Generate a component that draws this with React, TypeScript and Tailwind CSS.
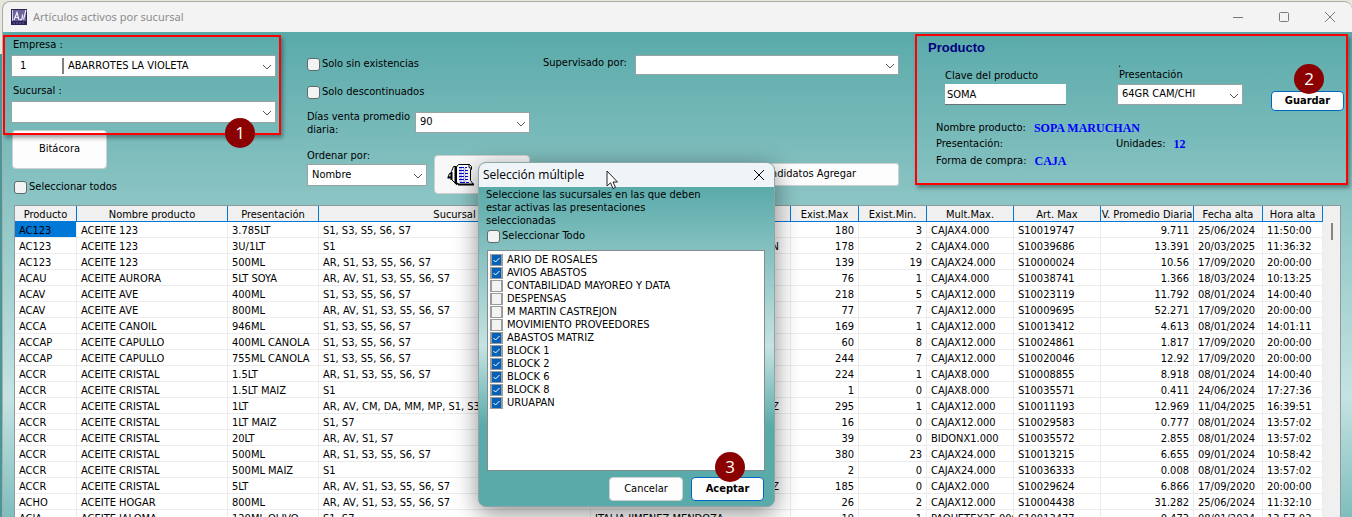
import React from 'react';
import { clsx } from 'clsx';

type Row = [string, string, string, string, string, string, string, string, string, string, string, string];

const SIN_AR = 'S1, S3, S5, S6, S7';
const CON_AR = 'AR, S1, S3, S5, S6, S7';
const CON_AV = 'AR, AV, S1, S3, S5, S6, S7';

const ROWS: Row[] = [
  ['AC123', 'ACEITE 123', '3.785LT', SIN_AR, '', '180', '3', 'CAJAX4.000', 'S10019747', '9.711', '25/06/2024', '11:50:00'],
  ['AC123', 'ACEITE 123', '3U/1LT', 'S1', 'N', '178', '2', 'CAJAX4.000', 'S10039686', '13.391', '20/03/2025', '11:36:32'],
  ['AC123', 'ACEITE 123', '500ML', CON_AR, '', '139', '19', 'CAJAX24.000', 'S10000024', '10.56', '17/09/2020', '20:00:00'],
  ['ACAU', 'ACEITE AURORA', '5LT SOYA', CON_AV, '', '76', '1', 'CAJAX4.000', 'S10038741', '1.366', '18/03/2024', '10:13:25'],
  ['ACAV', 'ACEITE AVE', '400ML', SIN_AR, '', '218', '5', 'CAJAX12.000', 'S10023119', '11.792', '08/01/2024', '14:00:40'],
  ['ACAV', 'ACEITE AVE', '800ML', CON_AV, '', '77', '7', 'CAJAX12.000', 'S10009695', '52.271', '17/09/2020', '20:00:00'],
  ['ACCA', 'ACEITE CANOIL', '946ML', SIN_AR, '', '169', '1', 'CAJAX12.000', 'S10013412', '4.613', '08/01/2024', '14:01:11'],
  ['ACCAP', 'ACEITE CAPULLO', '400ML CANOLA', SIN_AR, '', '60', '8', 'CAJAX12.000', 'S10024861', '1.817', '17/09/2020', '20:00:00'],
  ['ACCAP', 'ACEITE CAPULLO', '755ML CANOLA', SIN_AR, '', '244', '7', 'CAJAX12.000', 'S10020046', '12.92', '17/09/2020', '20:00:00'],
  ['ACCR', 'ACEITE CRISTAL', '1.5LT', CON_AR, '', '224', '1', 'CAJAX8.000', 'S10008855', '8.918', '08/01/2024', '14:00:40'],
  ['ACCR', 'ACEITE CRISTAL', '1.5LT MAIZ', 'S1', '', '1', '0', 'CAJAX8.000', 'S10035571', '0.411', '24/06/2024', '17:27:36'],
  ['ACCR', 'ACEITE CRISTAL', '1LT', 'AR, AV, CM, DA, MM, MP, S1, S3, S5, S6, S7', 'Z', '295', '1', 'CAJAX12.000', 'S10011193', '12.969', '11/04/2025', '16:39:51'],
  ['ACCR', 'ACEITE CRISTAL', '1LT MAIZ', 'S1, S7', '', '16', '0', 'CAJAX12.000', 'S10029583', '0.777', '08/01/2024', '13:57:02'],
  ['ACCR', 'ACEITE CRISTAL', '20LT', 'AR, AV, S1, S7', '', '39', '0', 'BIDONX1.000', 'S10035572', '2.855', '08/01/2024', '13:57:02'],
  ['ACCR', 'ACEITE CRISTAL', '500ML', CON_AR, '', '380', '23', 'CAJAX24.000', 'S10013215', '6.655', '09/01/2024', '10:58:42'],
  ['ACCR', 'ACEITE CRISTAL', '500ML MAIZ', 'S1', '', '2', '0', 'CAJAX24.000', 'S10036333', '0.008', '08/01/2024', '13:57:02'],
  ['ACCR', 'ACEITE CRISTAL', '5LT', CON_AV, 'Z', '185', '0', 'CAJAX2.000', 'S10029624', '6.866', '17/09/2020', '20:00:00'],
  ['ACHO', 'ACEITE HOGAR', '800ML', CON_AV, '', '26', '2', 'CAJAX12.000', 'S10004438', '31.282', '25/06/2024', '11:32:10'],
  ['ACJA', 'ACEITE JALOMA', '120ML OLIVO', 'S1, S7', 'ITALIA JIMENEZ MENDOZA', '19', '1', 'PAQUETEX25.000', 'S10013477', '0.473', '08/01/2024', '13:57:02'],
];

const COLUMNS = [
  { title: 'Producto', width: 'w-[62px]' },
  { title: 'Nombre producto', width: 'w-[151px]' },
  { title: 'Presentación', width: 'w-[91px]' },
  { title: 'Sucursal', width: 'w-[272px]' },
  { title: '', width: '' },
  { title: 'Exist.Max', width: 'w-[68px]' },
  { title: 'Exist.Min.', width: 'w-[68px]' },
  { title: 'Mult.Max.', width: 'w-[87px]' },
  { title: 'Art. Max', width: 'w-[87px]' },
  { title: 'V. Promedio Diaria', width: 'w-[93px]' },
  { title: 'Fecha alta', width: 'w-[69px]' },
  { title: 'Hora alta', width: 'w-[60px]' },
];

const BRANCHES: [string, boolean][] = [
  ['ARIO DE ROSALES', true],
  ['AVIOS ABASTOS', true],
  ['CONTABILIDAD MAYOREO Y DATA', false],
  ['DESPENSAS', false],
  ['M MARTIN CASTREJON', false],
  ['MOVIMIENTO PROVEEDORES', false],
  ['ABASTOS MATRIZ', true],
  ['BLOCK 1', true],
  ['BLOCK 2', true],
  ['BLOCK 6', true],
  ['BLOCK 8', true],
  ['URUAPAN', true],
];

function Combo({ id, value, code, className }: { id: string; value: string; code?: string; className: string }) {
  return (
    <div className={clsx('relative flex items-center border border-[#9aa3a3] bg-white', className)}>
      {code && <span className="ml-1 w-[48px] shrink-0 border-r-2 border-[#808080] pl-1 leading-4">{code}</span>}
      <select id={id} defaultValue={value} className="h-full min-w-0 flex-1 appearance-none bg-transparent pl-1 pr-5 outline-none">
        <option value={value}>{value}</option>
      </select>
      <svg className="pointer-events-none absolute right-[3px] top-1/2 mt-[-3px] h-2 w-2.5" viewBox="0 0 10 8" fill="none" stroke="#555" strokeWidth="1">
        <path d="M1 2 L5 6 L9 2" />
      </svg>
    </div>
  );
}

function Tick({ id, label }: { id: string; label: string }) {
  return (
    <label htmlFor={id} className="flex h-4 items-center gap-[2px]">
      <input id={id} type="checkbox" className="h-[13px] w-[13px] appearance-none rounded-[3px] border border-[#5e6b6b] bg-[#f3f3f3]" />
      {label}
    </label>
  );
}

function Marker({ n, className }: { n: number; className: string }) {
  return (
    <span className={clsx("absolute z-10 flex h-[30px] w-[30px] items-center justify-center rounded-full bg-[#8b0000] font-['Open_Sans',sans-serif] text-[17px] text-white", className)}>
      {n}
    </span>
  );
}

function PrinterIcon() {
  return (
    <svg className="h-6 w-7" viewBox="0 0 28 24" fill="none" stroke="#000">
      <path d="M8.5 3.5 H6.5 L4.5 8.5 V16.5 L8.5 20.5" fill="#fff" />
      <path d="M4.5 10.5 H2.5 L1.5 12.5 V14.5 H4.5" fill="#c0c0c0" />
      <path d="M0.5 14.5 H4.5 M4.5 9 V17" strokeWidth="2" />
      <path d="M9.5 4 L11.5 1.5 H22.5 L24.5 3.5 V6.5 H23.5 V17.5 L26.5 21.5 H12 L9.5 19.5 Z" fill="#fff" />
      <path d="M8.5 3 V19.5 L10.5 21.5 M11 21.5 H27" strokeWidth="2" />
      <path d="M22 1.5 V4.5 L24.5 5.5" />
      <path d="M12 4.5 H20 M12 7.5 H21 M12 10.5 H21 M12 13.5 H21 M12 16.5 H21 M13 19.5 H22" stroke="#0000d0" strokeDasharray="5 1" />
      <path d="M12 6 H19 M12 9 H20 M12 12 H19 M12 15 H20 M12 18 H20" stroke="#8f8fe8" strokeDasharray="3 1" />
    </svg>
  );
}

function AppLogo() {
  return (
    <svg className="h-4 w-4" viewBox="0 0 16 16" fill="none">
      <rect width="16" height="16" fill="#2d2358" />
      <rect x="1" y="1" width="14" height="11" fill="#6a649a" />
      <path d="M1.5 1 V12" stroke="#d5d2e8" />
      <path d="M3 11 L6 3.5 L8 11 M4 8.5 H7.5" stroke="#f0eff8" strokeWidth="1.2" />
      <path d="M8.5 10.5 C11 11.5 11.5 9 11.5 5.5 M12.5 10.5 L15 1" stroke="#f0eff8" strokeWidth="1.2" />
      <path d="M2 14 H14" stroke="#6f659c" strokeDasharray="2 1" />
    </svg>
  );
}

function CloseIcon() {
  return (
    <svg className="h-3 w-3" viewBox="0 0 12 12" fill="none" stroke="currentColor" strokeWidth="1">
      <path d="M1 1 L11 11 M11 1 L1 11" />
    </svg>
  );
}

function Filters() {
  return (
    <div className="flex min-w-0 flex-1 gap-[13px]">
      <div className="w-[223px] shrink-0 pt-6">
        <div className="flex flex-col gap-3">
          <Tick id="sin-existencias" label="Solo sin existencias" />
          <Tick id="descontinuados" label="Solo descontinuados" />
        </div>
        <div className="mt-[10px] flex items-start">
          <label htmlFor="dias" className="w-[108px] leading-[13px]">Días venta promedio diaria:</label>
          <Combo id="dias" value="90" className="mt-[2px] h-[21px] flex-1" />
        </div>
        <div className="mt-3 flex gap-[7px]">
          <div className="w-[120px]">
            <label htmlFor="orden" className="block leading-4">Ordenar por:</label>
            <Combo id="orden" value="Nombre" className="h-[22px]" />
          </div>
          <button aria-label="Imprimir" className="mt-[7px] flex h-[39px] flex-1 items-center rounded-[4px] border border-[#d0d0d0] bg-[#f8f8f8] pl-3">
            <PrinterIcon />
          </button>
        </div>
      </div>
      <div className="flex min-w-0 flex-1 flex-col items-end pt-[23px]">
        <div className="flex w-full items-start">
          <label htmlFor="supervisor" className="w-[92px] shrink-0 leading-4">Supervisado por:</label>
          <Combo id="supervisor" value="" className="h-5 min-w-0 flex-1" />
        </div>
        <button className="mt-[88px] h-[23px] w-[184px] rounded-[3px] border border-[#d0d0d0] bg-[#fdfdfd]">Candidatos Agregar</button>
      </div>
    </div>
  );
}

function ProductPanel() {
  return (
    <section className="relative mt-[2px] h-[151px] w-[433px] shrink-0 border-2 border-[#ff0000] pl-[11px] shadow-[2px_3px_4px_rgba(0,0,0,0.35)]">
      <h2 className="mt-1 font-['Liberation_Sans',sans-serif] text-[13px] font-bold leading-4 text-[#000080]">Producto</h2>
      <div className="flex pl-[17px] pt-[7px]">
        <div className="w-[121px] pt-[5px]">
          <label htmlFor="clave" className="block h-4 leading-4">Clave del producto</label>
          <input id="clave" defaultValue="SOMA" className="block h-[21px] w-full border-b border-[#6b7070] bg-white px-[2px] outline-none" />
        </div>
        <div className="ml-[51px] w-[126px]">
          <span className="block h-[5px] pl-px leading-[1px]">.</span>
          <label htmlFor="presentacion" className="block h-4 pl-[2px] leading-[14px]">Presentación</label>
          <Combo id="presentacion" value="64GR CAM/CHI" className="h-[21px]" />
        </div>
        <button className="ml-7 mt-[28px] h-5 w-[73px] rounded-[4px] border border-[#0067c0] bg-[#fdfdfd] text-[11px] font-bold leading-4">Guardar</button>
      </div>
      <dl className="mt-[9px] flex flex-col pl-2 leading-4">
        <div className="flex gap-2">
          <dt>Nombre producto:</dt>
          <dd className="font-['Liberation_Serif',serif] text-xs font-bold leading-4 text-[#0000ff]">SOPA MARUCHAN</dd>
        </div>
        <div className="flex">
          <dt className="w-[180px]">Presentación:</dt>
          <dt>Unidades:</dt>
          <dd className="ml-2 font-['Liberation_Serif',serif] text-xs font-bold leading-4 text-[#0000ff]">12</dd>
        </div>
        <div className="mt-px flex gap-2">
          <dt>Forma de compra:</dt>
          <dd className="font-['Liberation_Serif',serif] text-xs font-bold leading-4 text-[#0000ff]">CAJA</dd>
        </div>
      </dl>
      <Marker n={2} className="right-[22px] top-[28px]" />
    </section>
  );
}

function ProductTable() {
  return (
    <div className="mx-[11px] flex min-h-0 flex-1 overflow-hidden border-l border-r border-t border-[#8f9a9a] bg-white">
      <div className="min-w-0 flex-1">
        <table className="w-full table-fixed border-separate border-spacing-0 whitespace-nowrap">
          <thead>
            <tr>
              {COLUMNS.map((c, i) => (
                <th key={i} className={clsx('h-4 overflow-hidden border-b border-r border-[#0078d7] bg-[#f0f0f0] px-0 pb-0 pt-[2px] font-normal leading-[13px]', c.width)}>
                  {c.title}
                </th>
              ))}
            </tr>
          </thead>
          <tbody>
            {ROWS.map((row, r) => (
              <tr key={r}>
                {row.map((cell, c) => (
                  <td
                    key={c}
                    className={clsx(
                      'h-4 overflow-hidden border-b border-r border-[#ececec] pb-0 pt-[2px] leading-[13px]',
                      c === 4 && cell.length === 1 ? 'pl-1 pr-[11px] text-right' : 'px-1',
                      (c === 5 || c === 6 || c === 9) && 'text-right',
                      r === 0 && c === 0 && 'bg-[#0078d7]',
                    )}
                  >
                    {cell}
                  </td>
                ))}
              </tr>
            ))}
          </tbody>
        </table>
      </div>
      <div className="w-[17px] bg-[#f0f0f0] pl-2 pt-[17px]">
        <div className="h-[17px] w-[2px] bg-[#858585]" />
      </div>
    </div>
  );
}

function BranchDialog() {
  return (
    <div
      role="dialog"
      aria-labelledby="dialogo-titulo"
      className="absolute left-[478px] top-[162px] z-20 flex h-[345px] w-[297px] flex-col overflow-hidden rounded-lg border border-[#8fa5a5] bg-[#5aaaaa] shadow-[0_6px_24px_rgba(0,0,0,0.45)]"
    >
      <header className="flex h-6 shrink-0 items-center justify-between bg-[#eff4f9] pl-1 pr-[9px]">
        <h2 id="dialogo-titulo" className="font-['Open_Sans',sans-serif] text-xs">Selección múltiple</h2>
        <button aria-label="Cerrar"><CloseIcon /></button>
      </header>
      <div className="flex min-h-0 flex-1 flex-col bg-[linear-gradient(#5aaaaa,#c5e3e2_50%,#5aaaaa_75%)] pl-[7px] pr-[9px]">
        <p className="w-[230px] pt-px leading-[13px]">Seleccione las sucursales en las que deben estar activas las presentaciones seleccionadas</p>
        <div className="mt-px pl-px">
          <Tick id="todo" label="Seleccionar Todo" />
        </div>
        <ul className="ml-px mt-[6px] h-[221px] border border-[#838b8b] bg-white pl-[2px] pt-[2px]">
          {BRANCHES.map(([name, on], i) => (
            <li key={name} className="h-[13px]">
              <label htmlFor={`sucursal-${i}`} className="flex h-[13px] items-center gap-1">
                <span className="relative flex h-3 w-[13px] border border-l-2 border-r-2 border-[#9b9b9b] bg-[#f3f3f3]">
                  <input id={`sucursal-${i}`} type="checkbox" defaultChecked={on} className="h-full w-full appearance-none bg-[#f3f3f3] checked:bg-[#0560b8]" />
                  {on && (
                    <svg className="pointer-events-none absolute inset-0 h-full w-full" viewBox="0 0 9 10" fill="none" stroke="#fff">
                      <path d="M1.5 5 L3.5 7 L7.5 3" />
                    </svg>
                  )}
                </span>
                <span className="leading-[13px]">{name}</span>
              </label>
            </li>
          ))}
        </ul>
        <div className="mt-[6px] flex justify-end gap-2">
          <button className="h-6 w-[74px] rounded-[4px] border border-[#d0d0d0] bg-[#fdfdfd]">Cancelar</button>
          <button className="mr-px h-6 w-[73px] rounded-[4px] border border-[#0067c0] bg-[#fdfdfd] text-[11px] font-bold">Aceptar</button>
        </div>
      </div>
      <Marker n={3} className="right-[29px] top-[289px]" />
      <svg className="absolute left-[127px] top-[7px] h-5 w-3" viewBox="0 0 12 20">
        <path d="M1 1 V16 L4.5 12.8 L7 18.5 L9.5 17.4 L7 12 H11.5 Z" fill="#fff" stroke="#222" strokeWidth="1" />
      </svg>
    </div>
  );
}

export default function App() {
  return (
    <div className="relative flex h-screen flex-col overflow-hidden bg-[linear-gradient(#e6e8dc_0px,#e6e8dc_54px,#4a9696_54px)] pl-[2px] pt-px font-['DejaVu_Sans_Condensed','Noto_Sans',sans-serif] text-[11px] text-black">
      <main className="flex min-h-0 flex-1 flex-col overflow-hidden rounded-t-lg border-l border-t border-[#a9adad] bg-[#f3f3f3]">
        <header className="flex h-[30px] shrink-0 items-center gap-[6px] pl-2 pr-4">
          <AppLogo />
          <h1 className="flex-1 font-['Noto_Sans',sans-serif] text-[11px] text-[#8c8c8c]">Artículos activos por sucursal</h1>
          <div className="flex items-center gap-[34px] text-[#7a7a7a]">
            <button aria-label="Minimizar">
              <svg className="h-3 w-3" viewBox="0 0 12 12" stroke="currentColor"><path d="M1 6.5 H11" /></svg>
            </button>
            <button aria-label="Maximizar">
              <svg className="h-3 w-3" viewBox="0 0 12 12" fill="none" stroke="currentColor"><rect x="1.5" y="1.5" width="9" height="9" rx="1" /></svg>
            </button>
            <button aria-label="Cerrar ventana"><CloseIcon /></button>
          </div>
        </header>
        <div className="flex min-h-0 flex-1 flex-col bg-[linear-gradient(#5aaaaa_0px,#c5e3e2_365px,#5aaaaa_548px)]">
          <div className="flex h-[173px] shrink-0 pr-1">
            <section className="relative w-[304px] shrink-0 pl-2 pt-[5px]">
              <div className="flex w-[265px] flex-col gap-[2px]">
                <label htmlFor="empresa" className="pl-[2px] leading-4">Empresa :</label>
                <Combo id="empresa" value="ABARROTES LA VIOLETA" code="1" className="h-[22px]" />
                <label htmlFor="sucursal" className="mt-1 pl-[2px] leading-4">Sucursal :</label>
                <Combo id="sucursal" value="" className="h-[22px]" />
              </div>
              <button className="ml-px mt-[7px] block h-[39px] w-[95px] rounded-[4px] border border-[#d0d0d0] bg-[#fdfdfd]">Bitácora</button>
              <div className="mt-[10px] pl-[3px]">
                <Tick id="todos" label="Seleccionar todos" />
              </div>
              <div className="pointer-events-none absolute left-0 top-[3px] h-[100px] w-[278px] border-2 border-[#ff0000] shadow-[2px_3px_4px_rgba(0,0,0,0.35)]" />
              <Marker n={1} className="left-[222px] top-[86px]" />
            </section>
            <Filters />
            <div className="w-4 shrink-0" />
            <ProductPanel />
          </div>
          <ProductTable />
        </div>
      </main>
      <BranchDialog />
    </div>
  );
}
